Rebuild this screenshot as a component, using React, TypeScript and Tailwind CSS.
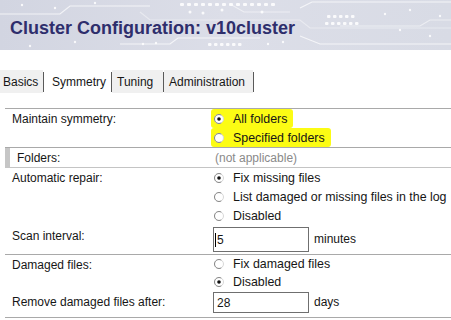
import React from 'react';

const Radio = ({ checked }: { checked?: boolean }) => (
    <svg width="12" height="12" viewBox="0 0 12 12" className="shrink-0">
        <circle cx="6" cy="6" r="4.5" fill="white" stroke="#d8d8d8" strokeWidth="1" />
        <path d="M8.25 2.1 A4.5 4.5 0 1 0 8.25 9.9" fill="none" stroke="#8a8a8a" strokeWidth="1" />
        {checked && <circle cx="6" cy="6" r="1.8" fill="#111" />}
    </svg>
);

function Option({ label, checked, mark }: { label: string; checked?: boolean; mark?: boolean }) {
    return (
        <div className="flex items-center h-full whitespace-nowrap">
            <span className={`flex items-center h-full pl-[2px] pr-[6px] ${mark ? 'bg-[#fcfc14] rounded-[3px]' : ''}`}>
                <Radio checked={checked} />
                <span className="ml-[8px] text-[12.4px] pt-[1px]">{label}</span>
            </span>
        </div>
    );
}

function Header() {
    return (
        <div className="relative h-[50px] bg-gradient-to-r from-[#d2d5e1] via-[#dcdee8] to-[#d8dbe5] overflow-hidden">
            <svg className="absolute inset-0" width="451" height="50" viewBox="0 0 451 50">
                <g stroke="white" strokeOpacity="0.7" strokeWidth="1.2" fill="none">
                    <path d="M0 14 H60 L70 6 H150" />
                    <path d="M120 44 H170 L178 38 H260" />
                    <path d="M140 12 L150 20 H300 L310 28 H451" strokeOpacity="0.4" />
                    <path d="M300 8 L312 2 H451" />
                    <path d="M300 36 L320 44 H451" />
                    <path d="M340 26 H420 L430 20 H451" strokeOpacity="0.5" />
                    <path d="M230 4 L244 12 H290" strokeOpacity="0.5" />
                </g>
                <g fill="white" fillOpacity="0.85">
                    {[0, 1, 2, 3, 4, 5, 6, 7, 8, 9, 10, 11, 12, 13].map((i) => (
                        <rect key={'a' + i} x={180 + i * 7} y={3} width="4" height="3" rx="1" />
                    ))}
                    {[0, 1, 2, 3, 4, 5].map((i) => (
                        <rect key={'b' + i} x={208 + i * 6} y={43} width="3.5" height="3" rx="1" />
                    ))}
                    {[0, 1, 2, 3, 4].map((i) => (
                        <rect key={'c' + i} x={327 + i * 6} y={15} width="3.5" height="3" rx="1" />
                    ))}
                    {[0, 1, 2, 3, 4, 5].map((i) => (
                        <rect key={'d' + i} x={325 + i * 6} y={22} width="3.5" height="3" rx="1" />
                    ))}
                    <circle cx="22" cy="5" r="1.2" />
                    <circle cx="55" cy="8" r="1.2" />
                    <circle cx="95" cy="3" r="1.2" />
                    <circle cx="190" cy="12" r="1.5" />
                    <circle cx="203" cy="13" r="1.5" />
                    <circle cx="222" cy="10" r="1.5" />
                    <circle cx="262" cy="12" r="1.5" />
                    <circle cx="143" cy="44" r="1.2" />
                    <circle cx="156" cy="43" r="1.2" />
                    <circle cx="268" cy="44" r="1.2" />
                    <circle cx="283" cy="42" r="1.2" />
                    <circle cx="385" cy="14" r="1.2" />
                    <circle cx="410" cy="10" r="1.2" />
                    <circle cx="440" cy="16" r="1.2" />
                    <circle cx="400" cy="30" r="1.2" />
                    <circle cx="430" cy="36" r="1.2" />
                    <circle cx="30" cy="46" r="1.2" />
                    <circle cx="75" cy="42" r="1.2" />
                </g>
            </svg>
            <div className="relative pl-[10px] pt-[17px] text-[18px] leading-[22px] font-bold text-[#2e2e6c] font-['Liberation_Sans',Arial,sans-serif]">
                Cluster Configuration: v10cluster
            </div>
        </div>
    );
}

export default function App() {
    const sep = <div className="w-px h-[20px] bg-[#5a5a5a] self-center" />;

    return (
        <div className="w-[451px] h-[320px] overflow-hidden bg-white text-[12px] text-[#161616] font-['Liberation_Sans',Arial,sans-serif]">
            <Header />

            {/* Tabs */}
            <div className="mt-[20px] h-[23px] flex">
                <div className="w-[43px] pl-[3px] bg-[#f0f0f0] leading-[24px]">Basics</div>
                {sep}
                <div className="w-[67px] pl-[8px] bg-white leading-[24px]">Symmetry</div>
                {sep}
                <div className="w-[51px] pl-[5px] bg-[#f0f0f0] leading-[24px]">Tuning</div>
                {sep}
                <div className="w-[89px] pl-[5px] bg-[#f0f0f0] leading-[24px]">Administration</div>
                {sep}
            </div>

            <div className="mt-[15px] ml-[5px] border-t border-[#a9a9a9]">
                {/* Maintain symmetry */}
                <div className="grid grid-cols-[208px_1fr] border-b border-[#a9a9a9]">
                    <div className="pl-[7px] pt-[1px] leading-[19px]">Maintain symmetry:</div>
                    <div className="-ml-[2px]">
                        <div className="h-[19px]"><Option label="All folders" checked mark /></div>
                        <div className="h-[19px]"><Option label="Specified folders" mark /></div>
                    </div>
                </div>

                {/* Folders */}
                <div className="grid grid-cols-[208px_1fr] border-b border-[#c4c4c4] h-[20px]">
                    <div className="flex items-stretch">
                        <div className="w-[5px] bg-[#c6c6c6]" />
                        <div className="pl-[7px] pt-[1px] leading-[19px]">Folders:</div>
                    </div>
                    <div className="pl-[2px] pt-[1px] leading-[19px] text-[#8a8a8a]">(not applicable)</div>
                </div>

                {/* Automatic repair */}
                <div className="grid grid-cols-[208px_1fr]">
                    <div className="pl-[7px] pt-[1px] leading-[19px]">Automatic repair:</div>
                    <div className="-ml-[2px]">
                        <div className="h-[19px]"><Option label="Fix missing files" checked /></div>
                        <div className="h-[19px]"><Option label="List damaged or missing files in the log" /></div>
                        <div className="h-[19px]"><Option label="Disabled" /></div>
                    </div>
                </div>

                {/* Scan interval */}
                <div className="grid grid-cols-[208px_1fr] border-b border-[#a9a9a9] h-[30px]">
                    <div className="pl-[7px] pt-[2px] leading-[19px]">Scan interval:</div>
                    <div className="flex items-start pt-[2px]">
                        <div className="w-[96px] h-[25px] border border-[#6f6f6f] flex items-center pl-[2px] relative">
                            <span className="absolute left-[1px] top-[5px] w-px h-[14px] bg-black" />
                            <span className="pl-[1px]">5</span>
                        </div>
                        <span className="ml-[5px] mt-[3px] leading-[19px]">minutes</span>
                    </div>
                </div>

                {/* Damaged files */}
                <div className="grid grid-cols-[208px_1fr]">
                    <div className="pl-[7px] pt-[1px] leading-[18px]">Damaged files:</div>
                    <div className="-ml-[2px]">
                        <div className="h-[18px]"><Option label="Fix damaged files" /></div>
                        <div className="h-[18px]"><Option label="Disabled" checked /></div>
                    </div>
                </div>

                {/* Remove damaged files after */}
                <div className="grid grid-cols-[208px_1fr] border-b border-[#a9a9a9] h-[27px]">
                    <div className="pl-[7px] pt-[2px] leading-[19px]">Remove damaged files after:</div>
                    <div className="flex items-start pt-[1px]">
                        <div className="w-[96px] h-[21px] border border-[#6f6f6f] flex items-center pl-[3px]">28</div>
                        <span className="ml-[5px] leading-[21px]">days</span>
                    </div>
                </div>
            </div>
        </div>
    );
}
